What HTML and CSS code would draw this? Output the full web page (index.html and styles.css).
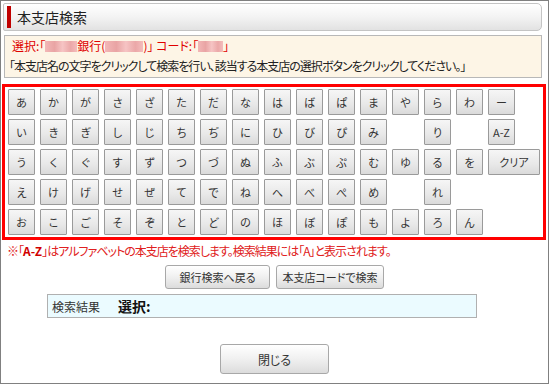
FILE: index.html
```html
<!DOCTYPE html>
<html lang="ja">
<head>
<meta charset="UTF-8">
<meta name="viewport" content="width=device-width, initial-scale=1.0">
<title>本支店検索</title>
<link rel="stylesheet" href="styles.css">
</head>
<body>

<div class="window">
  <div class="title-bar">
    <h1>本支店検索</h1>
  </div>

  <div class="info">
    <p class="selected">選択:「<span class="mask w32"></span>銀行(<span class="mask w38"></span>)」 コード:「<span class="mask w25"></span>」</p>
    <p class="guide">「本支店名の文字をクリックして検索を行い、該当する本支店の選択ボタンをクリックしてください。」</p>
  </div>

  <div class="kana-box">
    <div class="kana-grid">
      <button class="kana">あ</button>
      <button class="kana">か</button>
      <button class="kana">が</button>
      <button class="kana">さ</button>
      <button class="kana">ざ</button>
      <button class="kana">た</button>
      <button class="kana">だ</button>
      <button class="kana">な</button>
      <button class="kana">は</button>
      <button class="kana">ば</button>
      <button class="kana">ぱ</button>
      <button class="kana">ま</button>
      <button class="kana">や</button>
      <button class="kana">ら</button>
      <button class="kana">わ</button>
      <button class="kana">ー</button>

      <button class="kana">い</button>
      <button class="kana">き</button>
      <button class="kana">ぎ</button>
      <button class="kana">し</button>
      <button class="kana">じ</button>
      <button class="kana">ち</button>
      <button class="kana">ぢ</button>
      <button class="kana">に</button>
      <button class="kana">ひ</button>
      <button class="kana">び</button>
      <button class="kana">ぴ</button>
      <button class="kana">み</button>
      <span></span>
      <button class="kana">り</button>
      <span></span>
      <button class="kana">A-Z</button>

      <button class="kana">う</button>
      <button class="kana">く</button>
      <button class="kana">ぐ</button>
      <button class="kana">す</button>
      <button class="kana">ず</button>
      <button class="kana">つ</button>
      <button class="kana">づ</button>
      <button class="kana">ぬ</button>
      <button class="kana">ふ</button>
      <button class="kana">ぶ</button>
      <button class="kana">ぷ</button>
      <button class="kana">む</button>
      <button class="kana">ゆ</button>
      <button class="kana">る</button>
      <button class="kana">を</button>
      <button class="kana clear">クリア</button>

      <button class="kana">え</button>
      <button class="kana">け</button>
      <button class="kana">げ</button>
      <button class="kana">せ</button>
      <button class="kana">ぜ</button>
      <button class="kana">て</button>
      <button class="kana">で</button>
      <button class="kana">ね</button>
      <button class="kana">へ</button>
      <button class="kana">べ</button>
      <button class="kana">ぺ</button>
      <button class="kana">め</button>
      <span></span>
      <button class="kana">れ</button>
      <span></span>
      <span></span>

      <button class="kana">お</button>
      <button class="kana">こ</button>
      <button class="kana">ご</button>
      <button class="kana">そ</button>
      <button class="kana">ぞ</button>
      <button class="kana">と</button>
      <button class="kana">ど</button>
      <button class="kana">の</button>
      <button class="kana">ほ</button>
      <button class="kana">ぼ</button>
      <button class="kana">ぽ</button>
      <button class="kana">も</button>
      <button class="kana">よ</button>
      <button class="kana">ろ</button>
      <button class="kana">ん</button>
      <span></span>
    </div>
  </div>

  <p class="note">※「<b>A-Z</b>」はアルファベットの本支店を検索します。検索結果には「A」と表示されます。</p>

  <div class="actions">
    <button class="btn back">銀行検索へ戻る</button>
    <button class="btn code">本支店コードで検索</button>
  </div>

  <div class="result">
    <span class="result-label">検索結果</span>
    <span class="result-value">選択:</span>
  </div>

  <div class="footer">
    <button class="btn close">閉じる</button>
  </div>
</div>

</body>
</html>
```

FILE: styles.css
```css
body {
  margin: 0;
  font-family: "Noto Sans CJK JP", "Noto Sans", sans-serif;
  font-feature-settings: "palt";
  color: #222;
  background: #fff;
}
p {
  margin: 0;
}
button {
  font-family: inherit;
  font-feature-settings: "palt";
  cursor: pointer;
}
.window {
  width: 549px;
  height: 384px;
  box-sizing: border-box;
  border: 1px solid #808080;
  overflow: hidden;
}
.title-bar {
  margin: 2px 6px 0 2px;
  height: 28px;
  box-sizing: border-box;
  border: 1px solid #c4c4c4;
  border-radius: 2px 5px 5px 2px;
  background: linear-gradient(#ffffff, #f3f3f3 50%, #e2e2e2);
  display: flex;
  align-items: center;
}
h1 {
  margin: 0 0 0 3px;
  height: 22px;
  border-left: 4px solid #c00000;
  padding-left: 6px;
  font-size: 14px;
  font-weight: normal;
  line-height: 22px;
  color: #222;
}
.info {
  margin: 4px 6px 0 3px;
  height: 43px;
  box-sizing: border-box;
  border: 1px solid #b8b8b8;
  background: #fdf5e6;
  padding: 0 0 0 6px;
  font-size: 12px;
  line-height: 20px;
}
.selected {
  color: #e00000;
  padding-left: 1px;
}
.mask {
  display: inline-block;
  height: 11px;
  vertical-align: -1px;
  background: linear-gradient(90deg, #f3b7b7, #e9a4a4 30%, #f6c4c4 55%, #eba8a8 80%, #f4bcbc);
}
.w32 { width: 32px; }
.w38 { width: 38px; }
.w25 { width: 25px; }
.guide {
  margin-left: -2px;
  letter-spacing: -1px;
  color: #222;
}
.kana-box {
  margin: 6px 2px 0 1px;
  border: 3px solid #ff0000;
  padding: 2px 0 2px 3px;
}
.kana-grid {
  display: grid;
  grid-template-columns: repeat(15, 27px) 52px;
  grid-auto-rows: 26px;
  gap: 4px 5px;
}
.kana {
  width: 27px;
  height: 26px;
  padding: 0;
  box-sizing: border-box;
  border: 1px solid #9a9a9a;
  border-radius: 1px;
  background: linear-gradient(#f6f6f6, #e8e8e8 60%, #dadada);
  font-size: 11px;
  color: #333;
}
.kana.clear {
  width: 52px;
}
.note {
  margin: 3px 0 0 6px;
  color: #e02020;
  font-size: 12px;
  line-height: 16px;
  letter-spacing: -1px;
}
.note b {
  color: #d00000;
  letter-spacing: 0;
}
.actions {
  margin-top: 6px;
  display: flex;
  justify-content: center;
  gap: 6px;
}
.btn {
  height: 24px;
  box-sizing: border-box;
  border: 1px solid #a8a8a8;
  border-radius: 3px;
  background: linear-gradient(#ffffff, #f0f0f0 50%, #dcdcdc);
  font-size: 11px;
  color: #333;
  padding: 0;
}
.back {
  width: 105px;
}
.code {
  width: 108px;
}
.result {
  margin: 5px 0 0 46px;
  width: 430px;
  height: 24px;
  box-sizing: border-box;
  border: 1px solid #b0b0b0;
  background: #ebfbff;
  display: flex;
  align-items: center;
  padding-left: 4px;
}
.result-label {
  width: 66px;
  font-size: 12px;
  color: #333;
}
.result-value {
  font-size: 14px;
  font-weight: bold;
  color: #111;
}
.footer {
  margin-top: 26px;
  display: flex;
  justify-content: center;
}
.close {
  width: 109px;
  height: 30px;
  font-size: 12px;
}
```
